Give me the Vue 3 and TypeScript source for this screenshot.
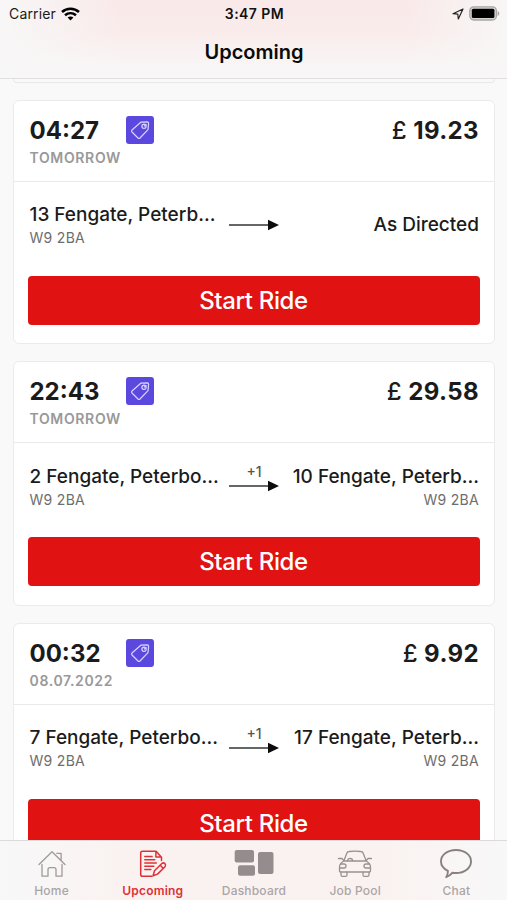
<script setup lang="ts">
interface Ride {
  time: string
  day: string
  price: string
  from: string
  fromCode: string
  to: string
  toCode?: string
  stops?: string
}

const rides: Ride[] = [
  { time: '04:27', day: 'TOMORROW', price: '19.23', from: '13 Fengate, Peterb...', fromCode: 'W9 2BA', to: 'As Directed' },
  { time: '22:43', day: 'TOMORROW', price: '29.58', from: '2 Fengate, Peterbo...', fromCode: 'W9 2BA', to: '10 Fengate, Peterb...', toCode: 'W9 2BA', stops: '+1' },
  { time: '00:32', day: '08.07.2022', price: '9.92', from: '7 Fengate, Peterbo...', fromCode: 'W9 2BA', to: '17 Fengate, Peterb...', toCode: 'W9 2BA', stops: '+1' },
]
</script>

<template>
  <div class="screen">
    <header class="top">
      <div class="status">
        <div class="side">
          <span class="carrier">Carrier</span>
          <svg class="wifi" width="19" height="14" viewBox="0 0 19 14" fill="none" stroke="#000" stroke-width="2.5">
            <path d="M1 5C5.800.5 13.200.5 18 5" />
            <path d="M4 8.300c3.300-2.900 7.700-2.900 11 0" />
            <path d="M6.600 10.600c1.600-1.500 4.200-1.500 5.800 0L9.500 13.600z" fill="#000" stroke="none" />
          </svg>
        </div>
        <span class="clock">3:47 PM</span>
        <div class="side right">
          <svg width="12" height="12" viewBox="0 0 12 12" fill="none" stroke="#222" stroke-width="1.2" stroke-linejoin="round">
            <path d="M11 1 1 5.700l4.800.5.500 4.800z" />
          </svg>
          <svg width="31" height="15" viewBox="0 0 31 15">
            <rect x=".8" y=".8" width="26.600" height="13.200" rx="4" fill="#d8d3d3" stroke="#aaa5a5" stroke-width="1.300" />
            <rect x="2.800" y="2.800" width="22.600" height="9.200" rx="1.500" fill="#000" />
            <path d="M28.600 5c2.300.7 2.300 4.300 0 5z" fill="#aaa5a5" />
          </svg>
        </div>
      </div>
      <h1>Upcoming</h1>
    </header>

    <main class="list">
      <div class="previous"></div>
      <article v-for="ride in rides" :key="ride.time" class="card">
        <div class="head">
          <div class="when">
            <div class="time">{{ ride.time }}</div>
            <div class="day">{{ ride.day }}</div>
          </div>
          <div class="tag">
            <svg width="28" height="28" viewBox="0 0 28 28" fill="none" stroke="#d9d4ff" stroke-width="1.200" stroke-linejoin="round">
              <path d="M14.800 6.200 21.300 5.800q1.300 0 1.300 1.400L22 13.700 14 22q-1 .9-2 0L6 16q-.9-1 0-2z" />
              <circle cx="18" cy="10.200" r="2.100" />
              <path d="M18 10.200 20.500 8.500" />
            </svg>
          </div>
          <div class="price"><span class="currency">£</span> {{ ride.price }}</div>
        </div>
        <div class="route">
          <div class="place">
            <div class="address">{{ ride.from }}</div>
            <div class="code">{{ ride.fromCode }}</div>
          </div>
          <div class="arrow">
            <span class="stops">{{ ride.stops }}</span>
            <svg width="50" height="12" viewBox="0 0 50 12">
              <path d="M0 6h40" stroke="#333" stroke-width="1.500" />
              <path d="M39 .7 50 6 39 11.300z" fill="#0c0c0c" />
            </svg>
          </div>
          <div class="place end">
            <div class="address" :class="{ directed: !ride.toCode }">{{ ride.to }}</div>
            <div v-if="ride.toCode" class="code">{{ ride.toCode }}</div>
          </div>
        </div>
        <button type="button" class="start">Start Ride</button>
      </article>
    </main>

    <nav class="tabs">
      <div class="tab home">
        <svg width="30" height="30" viewBox="0 0 30 30" fill="none" stroke="#a09a99" stroke-width="1.300" stroke-linejoin="round" stroke-linecap="round">
          <path d="M2 15.500 15 2.700 28 15.500M19.800 4.300h4.300v7M5 15.500v11.700h6v-6.500q0-2 2-2h4q2 0 2 2v6.500h6V15.500" />
        </svg>
        <span>Home</span>
      </div>
      <div class="tab upcoming">
        <svg width="30" height="30" viewBox="0 0 30 30" fill="none" stroke="#df3037" stroke-width="1.500" stroke-linejoin="round" stroke-linecap="round">
          <path d="M23.500 11.500V8.200L18.100 2.200H4.500q-1.800 0-1.800 1.800v21.500q0 1.800 1.800 1.800h9.500M17.900 2.500v5.500h5.400" />
          <path d="M6.800 7.500h7.300M6.800 10.700h10M6.800 14h11.500M6.800 17.300h9M6.800 20.600h6" />
          <path d="m16.500 21.700 7.600-7.400q1.500-1 2.900.5 1.300 1.600 0 2.900l-7.500 7.400-4.400 1.600zM22.300 16.200l3 3.300" />
        </svg>
        <span>Upcoming</span>
      </div>
      <div class="tab dashboard">
        <svg width="40" height="30" viewBox="0 0 40 30" fill="#958d8d">
          <rect x=".7" y="1" width="19.300" height="12.500" rx="2" />
          <rect x="4" y="16.200" width="17" height="10.600" rx="2" />
          <rect x="24" y="3" width="15.500" height="22" rx="2" />
        </svg>
        <span>Dashboard</span>
      </div>
      <div class="tab jobs">
        <svg width="36" height="30" viewBox="0 0 36 30" fill="none" stroke="#989191" stroke-width="1.300" stroke-linejoin="round" stroke-linecap="round">
          <path d="M6.800 12 9.800 4.200q.6-1.600 2.400-1.700 5.800-.6 11.600 0 1.800.1 2.400 1.700l3 7.800M6.800 12h22.400q4.300 2.500 4.300 6v4q0 1-1 1h-29q-1 0-1-1v-4q0-3.500 4.300-6z" />
          <path d="M1.500 9.500h3.500l1.500 1.700M34.500 9.500H31l-1.500 1.700M4 23.200v2.700q0 1.500 1.500 1.500h3q1.500 0 1.500-1.500v-2.700M26 23.200v2.700q0 1.500 1.500 1.500h3q1.500 0 1.500-1.500v-2.700" />
          <path d="M3.500 15h3.500q2 0 2 2t-2 2H3M32.500 15H29q-2 0-2 2t2 2h4M10.500 11.500q.5-2.500 3-2 2 .3 2.200 2" />
        </svg>
        <span>Job Pool</span>
      </div>
      <div class="tab chat">
        <svg width="34" height="32" viewBox="0 0 34 32" fill="none" stroke="#898181" stroke-width="1.900" stroke-linejoin="round">
          <path d="M17 2c8.600 0 15 5 15 11.500S25.600 25 17 25q-1.800 0-3.500-.3-3 3.600-6.300 4.500 1.900-2.800 1.700-6.300Q2 19.500 2 13.500C2 7 8.400 2 17 2z" />
        </svg>
        <span>Chat</span>
      </div>
    </nav>
  </div>
</template>

<style>
body {
  margin: 0;
}
</style>

<style scoped>
.screen {
  width: 507px;
  height: 900px;
  display: flex;
  flex-direction: column;
  overflow: hidden;
  background: #f9f9f9;
  color: #1b1b1b;
  font-family: Inter, "Liberation Sans", sans-serif;
}

.top {
  flex: none;
  box-sizing: border-box;
  height: 79px;
  border-bottom: 1px solid #e0dfdf;
  background:
    linear-gradient(90deg, #f8f7f7 0, rgba(248, 247, 247, 0) 24%, rgba(248, 247, 247, 0) 80%, #f8f6f6 100%),
    linear-gradient(#f9e9e9 0, #f9eceb 42%, #f8f6f6 85%);
}

.status {
  display: grid;
  grid-template-columns: 1fr auto 1fr;
  align-items: center;
  height: 27px;
  padding: 0 7px 0 9px;
}

.side {
  display: flex;
  align-items: center;
  gap: 5px;
}

.side.right {
  justify-content: flex-end;
}

.carrier {
  font-size: 14px;
  letter-spacing: 0.15px;
}

.clock {
  font-size: 14px;
  font-weight: 600;
  letter-spacing: 0.45px;
  color: #111;
}

h1 {
  margin: 12px 0 0;
  padding-left: 1px;
  text-align: center;
  font-size: 20px;
  line-height: 27px;
  font-weight: 600;
  color: #0b0b0b;
}

.list {
  flex: 1;
  min-height: 0;
  overflow: hidden;
  padding: 0 12px 0 13px;
}

.previous {
  box-sizing: border-box;
  height: 4px;
  margin-bottom: 16.500px;
  border: 1px solid #e8e8e8;
  border-top: 0;
  border-radius: 0 0 5px 5px;
}

.card {
  box-sizing: border-box;
  height: 244.500px;
  margin-bottom: 17px;
  border: 1.500px solid #ebebeb;
  border-radius: 6px;
  background: #fff;
}

.head {
  display: flex;
  box-sizing: border-box;
  height: 81px;
  padding: 15px 15px 0 15.500px;
  border-bottom: 1px solid #e9e9e9;
}

.when {
  width: 96.500px;
}

.time,
.price {
  font-size: 24px;
  line-height: 30px;
  font-weight: 650;
  letter-spacing: 0;
}

.day {
  margin-top: 3px;
  font-size: 14px;
  line-height: 18px;
  font-weight: 600;
  letter-spacing: 0.65px;
  color: #999;
}

.tag {
  width: 28px;
  height: 28px;
  border-radius: 3px;
  background: #5b49df;
}

.price {
  margin-left: auto;
  letter-spacing: 0.4px;
}

.currency {
  font-weight: 500;
}

.route {
  display: flex;
  align-items: center;
  box-sizing: border-box;
  height: 87px;
  padding: 1px 15px 0 15.500px;
}

.place {
  width: 199.500px;
  white-space: nowrap;
}

.end {
  flex: 1;
  text-align: right;
}

.address {
  font-size: 19px;
  line-height: 25px;
  font-weight: 450;
  letter-spacing: 0;
}

.directed {
  padding-bottom: 3px;
}

.code {
  font-size: 14px;
  line-height: 22px;
  letter-spacing: 0.3px;
  color: #6d6d6d;
}

.arrow {
  display: flex;
  flex-direction: column;
  width: 50px;
  height: 50px;
}

.stops {
  height: 18px;
  font-size: 14px;
  line-height: 20px;
  font-weight: 450;
  text-align: center;
  color: #555;
}

.start {
  display: block;
  width: 452px;
  height: 49px;
  margin: 7px 0 0 13.500px;
  padding: 0;
  border: 0;
  border-radius: 4px;
  background: #e11212;
  color: #fff;
  font-family: inherit;
  font-size: 24px;
  font-weight: 500;
  letter-spacing: -0.35px;
}

.tabs {
  flex: none;
  box-sizing: border-box;
  display: grid;
  grid-template-columns: repeat(5, 1fr);
  height: 60px;
  padding: 7px 0 0 1px;
  border-top: 1px solid #dedada;
  background: linear-gradient(90deg, #f8f8f8 0, #faf2f1 25%, #faf2f1 75%, #f8f8f8 100%);
}

.tab {
  display: flex;
  flex-direction: column;
  align-items: center;
  font-size: 12px;
  font-weight: 500;
  line-height: 16px;
  letter-spacing: 0.2px;
  color: #aaa5a5;
}

.tab svg {
  flex: none;
  height: 32px;
}

.tab span {
  margin-top: 3px;
}

.upcoming {
  font-weight: 600;
  color: #df3037;
}
</style>
